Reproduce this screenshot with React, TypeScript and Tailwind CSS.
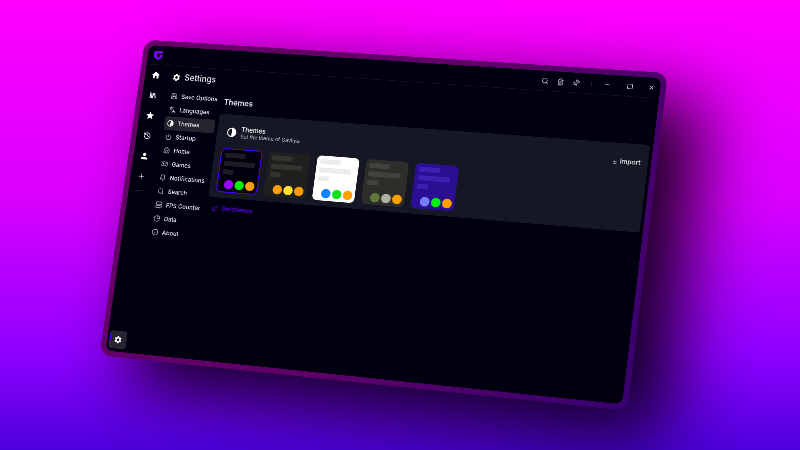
import { useMemo } from "react";
import type { ReactNode } from "react";
import {
  ArrowDownToLine,
  Bell,
  ExternalLink,
  Gamepad2,
  History,
  Home,
  Info,
  Languages,
  Library,
  Minus,
  Pin,
  Plus,
  Power,
  Save,
  Search,
  Server,
  Trash2,
  X,
  PieChart,
  Square,
} from "lucide-react";
import { MdHome, MdPerson, MdSettings, MdStar } from "react-icons/md";

const W = 1050;
const H = 652;
const corners = {
  tl: [145, 39.6],
  tr: [668, 73],
  br: [627.4, 410.7],
  bl: [99.5, 355.3],
};

function homography() {
  const [x0, y0] = corners.tl;
  const [x1, y1] = corners.tr;
  const [x2, y2] = corners.br;
  const [x3, y3] = corners.bl;
  const dx1 = x1 - x2, dx2 = x3 - x2, dx3 = x0 - x1 + x2 - x3;
  const dy1 = y1 - y2, dy2 = y3 - y2, dy3 = y0 - y1 + y2 - y3;
  const den = dx1 * dy2 - dx2 * dy1;
  const g = (dx3 * dy2 - dx2 * dy3) / den;
  const h = (dx1 * dy3 - dx3 * dy1) / den;
  const a = x1 - x0 + g * x1, b = x3 - x0 + h * x3;
  const d = y1 - y0 + g * y1, e = y3 - y0 + h * y3;
  return `matrix3d(${a / W},${d / W},0,${g / W},${b / H},${e / H},0,${h / H},0,0,1,0,${x0},${y0},0,1)`;
}

function HalfCircle({ size }: { size: number }) {
  return (
    <svg width={size} height={size} viewBox="0 0 20 20">
      <circle cx="10" cy="10" r="8.500" fill="none" stroke="white" strokeWidth="2" />
      <path d="M10 1.500a8.500 8.500 0 0 1 0 17z" fill="white" />
    </svg>
  );
}

const menu: [string, ReactNode][] = [
  ["Save Options", <Save size={14} />],
  ["Languages", <Languages size={14} />],
  ["Themes", <HalfCircle size={14} />],
  ["Startup", <Power size={14} />],
  ["Home", <Home size={14} />],
  ["Games", <Gamepad2 size={14} />],
  ["Notifications", <Bell size={14} />],
  ["Search", <Search size={14} />],
  ["FPS Counter", <Server size={14} />],
  ["Data", <PieChart size={14} />],
  ["About", <Info size={14} />],
];

type Theme = { bg: string; bar: string; dots: string[] };
const themes: Theme[] = [
  { bg: "bg-[#02010f] border-2 border-[#4f00e0]", bar: "bg-[#1d1d28]", dots: ["bg-[#a000ff]", "bg-[#00f000]", "bg-[#ffa000]"] },
  { bg: "bg-[#201f1d]", bar: "bg-[#33332f]", dots: ["bg-[#ff9d0a]", "bg-[#ffe135]", "bg-[#ff9a0a]"] },
  { bg: "bg-white", bar: "bg-[#ececec]", dots: ["bg-[#0a84ff]", "bg-[#10e020]", "bg-[#ffa000]"] },
  { bg: "bg-[#2d2d2a]", bar: "bg-[#41413e]", dots: ["bg-[#5c7a3a]", "bg-[#b0b0a0]", "bg-[#ffa000]"] },
  { bg: "bg-[#2a0f92]", bar: "bg-[#3e1fb4]", dots: ["bg-[#7b7bff]", "bg-[#00ee10]", "bg-[#ffa000]"] },
];

function ThemeCard({ t }: { t: Theme }) {
  return (
    <div className={`relative flex h-[90px] w-[85px] shrink-0 flex-col gap-[7px] rounded-[9px] p-[7px] ${t.bg}`}>
      <div className={`h-[10px] w-[42px] rounded-[3px] ${t.bar}`} />
      <div className={`h-[10px] w-[64px] rounded-[3px] ${t.bar}`} />
      <div className={`h-[10px] w-[22px] rounded-[3px] ${t.bar}`} />
      <div className="absolute bottom-[5px] right-[5px] flex gap-[3px]">
        {t.dots.map((d, i) => (
          <div key={i} className={`h-[19px] w-[19px] rounded-full ${d}`} />
        ))}
      </div>
    </div>
  );
}

export default function App() {
  const transform = useMemo(homography, []);
  return (
    <div className="relative h-[450px] w-[800px] overflow-hidden bg-[linear-gradient(180deg,#ff00ff_0%,#d800ff_45%,#8f00ff_78%,#4c00dc_100%)] font-['Inter','Liberation_Sans',sans-serif]">
      <div
        className="absolute left-0 top-0 h-[652px] w-[1050px] origin-top-left rounded-[24px] bg-[linear-gradient(115deg,#660068_0%,#5e0068_55%,#38006f_100%)] p-[11px] shadow-[70px_50px_140px_rgba(0,0,0,0.9)]"
        style={{ transform }}
      >
        <div className="flex h-full w-full flex-col overflow-hidden rounded-[14px] bg-[#010010] text-[#e9e9ee]">
          <header className="flex h-[40px] shrink-0 items-center border-b border-[#16161f] pl-[12px] pr-[8px]">
            <svg width="20" height="20" viewBox="0 0 20 20">
              <path d="M1 1h18v5H7v6l3 2.500 3.500-2.500V9H19v5l-9 5.500L1 14z" fill="#7a00ff" />
            </svg>
            <div className="ml-auto flex items-center text-[#dcdce2]">
              <Search size={14} className="mr-[16px]" />
              <Trash2 size={14} className="mr-[16px]" />
              <Pin size={14} className="mr-[22px] rotate-45" />
              <div className="mr-[24px] h-[20px] w-px bg-[#2b2b35]" />
              <Minus size={13} className="mr-[30px]" />
              <Square size={12} className="mr-[28px]" />
              <X size={13} className="mr-[2px]" />
            </div>
          </header>
          <div className="flex min-h-0 flex-1">
            <aside className="flex w-[42px] shrink-0 flex-col items-center pl-[4px] text-white">
              <div className="flex h-[42px] items-center"><MdHome size={20} /></div>
              <div className="flex h-[42px] items-center"><Library size={16} strokeWidth={3} /></div>
              <div className="flex h-[42px] items-center"><MdStar size={20} /></div>
              <div className="flex h-[42px] items-center"><History size={16} /></div>
              <div className="flex h-[42px] items-center"><MdPerson size={20} /></div>
              <div className="flex h-[42px] items-center"><Plus size={18} strokeWidth={1.5} /></div>
              <div className="mt-[8px] h-px w-[20px] bg-[#2b2b35]" />
              <div className="relative mb-[6px] mt-auto flex h-[36px] w-[36px] items-center justify-center overflow-hidden rounded-[5px] bg-[#25252f]">
                <div className="absolute bottom-[6px] left-0 top-[6px] w-[2px] bg-[#5a00f0]" />
                <MdSettings size={18} />
              </div>
            </aside>
            <div className="flex min-w-0 flex-1">
              <nav className="w-[126px] shrink-0 pl-[13px]">
                <div className="mb-[2px] flex h-[46px] items-center pl-[3px]">
                  <MdSettings size={18} className="text-white" />
                  <span className="ml-[8px] text-[17px] font-medium text-[#ececf0]">Settings</span>
                </div>
                {menu.map(([label, icon]) => (
                  <div
                    key={label}
                    className={`flex h-[28px] w-[106px] items-center gap-[8px] whitespace-nowrap rounded-[5px] pl-[6px] text-[12px] font-medium ${label === "Themes" ? "bg-[#24242f]" : ""}`}
                  >
                    <span className="text-[#d4d4da]">{icon}</span>
                    {label}
                  </div>
                ))}
              </nav>
              <main className="min-w-0 flex-1 pr-[6px]">
                <div className="flex h-[91px] items-end pl-[5px]">
                  <h1 className="mb-[13px] text-[15.500px] font-semibold">Themes</h1>
                </div>
                <div className="h-[170px] rounded-[6px] bg-[#161725] p-[6px]">
                  <div className="flex items-start justify-between pb-[14px] pl-[14px] pr-[8px] pt-[15px]">
                    <div className="flex items-center gap-[9px]">
                      <HalfCircle size={20} />
                      <div>
                        <div className="text-[13px] font-semibold leading-[16px]">Themes</div>
                        <div className="text-[10.500px] leading-[14px] text-[#c6c6ce]">Set the theme of Gavilya.</div>
                      </div>
                    </div>
                    <div className="mt-[6px] flex items-center gap-[4px] text-[12.500px] font-medium">
                      <ArrowDownToLine size={11} />
                      Import
                    </div>
                  </div>
                  <div className="ml-[8px] mt-[4px] flex gap-[14px]">
                    {themes.map((t, i) => (
                      <ThemeCard key={i} t={t} />
                    ))}
                  </div>
                </div>
                <div className="mt-[14px] flex items-center gap-[8px] pl-[11px] text-[11.500px] font-semibold text-[#5a00f0]">
                  <ExternalLink size={12} />
                  Get themes
                </div>
              </main>
            </div>
          </div>
        </div>
      </div>
    </div>
  );
}
